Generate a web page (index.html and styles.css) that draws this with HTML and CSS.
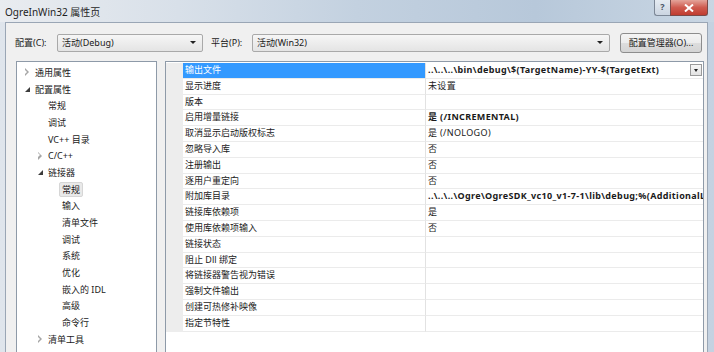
FILE: index.html
```html
<!DOCTYPE html>
<html lang="zh-CN">
<head>
  <meta charset="UTF-8" />
  <title>OgreInWin32 属性页</title>
  <link rel="stylesheet" href="styles.css">
</head>
<body>
  <div class="window">
    <div class="titlebar">
      <span class="title">OgreInWin32 属性页</span>
      <div class="caption-btns">
        <span class="cap-help">?</span>
        <span class="cap-close">
          <svg width="10" height="8" viewBox="0 0 10 8"><path d="M1 0.5 L9 7.5 M9 0.5 L1 7.5" stroke="#fff" stroke-width="2"/></svg>
        </span>
      </div>
    </div>

    <div class="client">
      <div class="toolbar">
        <label class="tb-label">配置(C):</label>
        <div class="combo combo-config"><span>活动(Debug)</span><i class="arrow"></i></div>
        <label class="tb-label tb-label-platform">平台(P):</label>
        <div class="combo combo-platform"><span>活动(Win32)</span><i class="arrow"></i></div>
        <button class="btn">配置管理器(O)...</button>
      </div>

      <div class="main">
        <ul class="tree">
          <li class="node lv0"><span class="tog closed"></span>通用属性</li>
          <li class="node lv0"><span class="tog open"></span>配置属性</li>
          <li class="node lv1"><span class="tog"></span>常规</li>
          <li class="node lv1"><span class="tog"></span>调试</li>
          <li class="node lv1"><span class="tog"></span>VC++ 目录</li>
          <li class="node lv1"><span class="tog closed"></span>C/C++</li>
          <li class="node lv1"><span class="tog open"></span>链接器</li>
          <li class="node lv2"><span class="tog"></span><span class="sel">常规</span></li>
          <li class="node lv2"><span class="tog"></span>输入</li>
          <li class="node lv2"><span class="tog"></span>清单文件</li>
          <li class="node lv2"><span class="tog"></span>调试</li>
          <li class="node lv2"><span class="tog"></span>系统</li>
          <li class="node lv2"><span class="tog"></span>优化</li>
          <li class="node lv2"><span class="tog"></span>嵌入的 IDL</li>
          <li class="node lv2"><span class="tog"></span>高级</li>
          <li class="node lv2"><span class="tog"></span>命令行</li>
          <li class="node lv1"><span class="tog closed"></span>清单工具</li>
          <li class="node lv1"><span class="tog closed"></span>资源</li>
        </ul>

        <div class="grid">
          <div class="row active">
            <div class="name">输出文件</div>
            <div class="value bold">..\..\..\bin\debug\$(TargetName)-YY-$(TargetExt)<i class="drop"></i></div>
          </div>
          <div class="row"><div class="name">显示进度</div><div class="value">未设置</div></div>
          <div class="row"><div class="name">版本</div><div class="value"></div></div>
          <div class="row"><div class="name">启用增量链接</div><div class="value bold">是 (/INCREMENTAL)</div></div>
          <div class="row"><div class="name">取消显示启动版权标志</div><div class="value">是 (/NOLOGO)</div></div>
          <div class="row"><div class="name">忽略导入库</div><div class="value">否</div></div>
          <div class="row"><div class="name">注册输出</div><div class="value">否</div></div>
          <div class="row"><div class="name">逐用户重定向</div><div class="value">否</div></div>
          <div class="row"><div class="name">附加库目录</div><div class="value bold">..\..\..\Ogre\OgreSDK_vc10_v1-7-1\lib\debug;%(AdditionalLibraryDirectories)</div></div>
          <div class="row"><div class="name">链接库依赖项</div><div class="value">是</div></div>
          <div class="row"><div class="name">使用库依赖项输入</div><div class="value">否</div></div>
          <div class="row"><div class="name">链接状态</div><div class="value"></div></div>
          <div class="row"><div class="name">阻止 Dll 绑定</div><div class="value"></div></div>
          <div class="row"><div class="name">将链接器警告视为错误</div><div class="value"></div></div>
          <div class="row"><div class="name">强制文件输出</div><div class="value"></div></div>
          <div class="row"><div class="name">创建可热修补映像</div><div class="value"></div></div>
          <div class="row"><div class="name">指定节特性</div><div class="value"></div></div>
        </div>
      </div>
    </div>
  </div>
</body>
</html>
```

FILE: styles.css
```css
* {
  box-sizing: border-box;
}

body {
  margin: 0;
  width: 714px;
  height: 352px;
  overflow: hidden;
  font-family: "Noto Sans", "Noto Sans CJK SC", sans-serif;
  font-size: 9px;
  color: #1a1a1a;
  background: #f0f0f0;
}

.window {
  height: 352px;
  display: flex;
  flex-direction: column;
  padding: 0 6px 0 5px;
  background: linear-gradient(90deg, #dfe5ec 0%, #cdd8e4 40%, #bccbdc 75%, #c4d2e1 100%);
}

.titlebar {
  height: 22px;
  display: flex;
  align-items: flex-start;
  margin-left: -5px;
  margin-right: -6px;
  background: linear-gradient(90deg, #e9ecf0 0%, #d8e0e9 25%, #c3d1e0 50%, #b7c8da 75%, #c9d6e3 100%);
}

.title {
  padding: 4px 0 0 5px;
  font-size: 10px;
  color: #1e1e1e;
}

.caption-btns {
  margin-left: auto;
  margin-right: 6px;
  display: flex;
}

.cap-help {
  width: 16px;
  height: 16px;
  border: 1px solid #7c8796;
  border-top: none;
  border-right: none;
  border-radius: 0 0 0 3px;
  background: linear-gradient(#e5ebf2, #cbd5e1);
  color: #4a5566;
  font-size: 9px;
  font-weight: bold;
  text-align: center;
  line-height: 14px;
}

.cap-close {
  width: 38px;
  height: 16px;
  border: 1px solid #7b4a48;
  border-top: none;
  border-radius: 0 0 3px 0;
  background: linear-gradient(#e4a49a, #cf5b4f 50%, #c03c30);
  display: flex;
  align-items: center;
  justify-content: center;
}

.client {
  flex: 1;
  display: flex;
  flex-direction: column;
  background: #f0f0f0;
  border: 1px solid #9aa6b5;
  border-bottom: none;
  min-height: 0;
}

.toolbar {
  display: flex;
  align-items: center;
  height: 19px;
  margin-top: 10px;
  padding-left: 9px;
}

.tb-label {
  width: 42px;
}

.tb-label-platform {
  margin-left: 8px;
  width: 41px;
}

.combo {
  height: 18px;
  display: flex;
  align-items: center;
  padding-left: 4px;
  border: 1px solid #a9a9a9;
  border-radius: 2px;
  background: linear-gradient(#f6f6f6, #e4e4e4);
}

.combo span {
  flex: 1;
}

.combo-config {
  width: 146px;
}

.combo-platform {
  width: 358px;
}

.arrow {
  width: 0;
  height: 0;
  margin-right: 6px;
  border-left: 3px solid transparent;
  border-right: 3px solid transparent;
  border-top: 3px solid #222;
}

.btn {
  margin-left: 10px;
  width: 82px;
  height: 20px;
  padding: 0;
  font: inherit;
  color: #1a1a1a;
  border: 1px solid #8d8d8d;
  border-radius: 3px;
  background: linear-gradient(#f4f4f4 0%, #ececec 50%, #dddddd 51%, #d4d4d4 100%);
}

.main {
  flex: 1;
  display: flex;
  margin-top: 9px;
  padding-left: 10px;
  min-height: 0;
}

.tree {
  list-style: none;
  margin: 0;
  padding: 2px 0 0;
  width: 141px;
  border: 1px solid #8e9aa8;
  border-bottom: none;
  background: #fff;
  overflow: hidden;
}

.node {
  display: flex;
  align-items: center;
  height: 16.7px;
  white-space: nowrap;
}

.lv0 {
  padding-left: 5px;
}

.lv1 {
  padding-left: 18px;
}

.lv2 {
  padding-left: 32px;
}

.tog {
  width: 13px;
  height: 8px;
  flex-shrink: 0;
  position: relative;
}

.tog.closed::before {
  content: "";
  position: absolute;
  left: 3px;
  top: 0;
  border-left: 4px solid #a6a6a6;
  border-top: 4px solid transparent;
  border-bottom: 4px solid transparent;
}

.tog.closed::after {
  content: "";
  position: absolute;
  left: 3px;
  top: 1.5px;
  border-left: 2.5px solid #fff;
  border-top: 2.5px solid transparent;
  border-bottom: 2.5px solid transparent;
}

.tog.open::before {
  content: "";
  position: absolute;
  left: 3px;
  top: 2px;
  border-right: 5px solid #3c3c3c;
  border-top: 5px solid transparent;
}

.sel {
  margin-left: -3px;
  padding: 0 2px;
  line-height: 13px;
  background: #e9e9e9;
  border: 1px solid #d6d6d6;
  border-radius: 2px;
}

.grid {
  margin-left: 8px;
  width: 539px;
  border: 1px solid #8e9aa8;
  border-bottom: none;
  background: #fff;
  padding-top: 1px;
  overflow: hidden;
}

.row {
  display: flex;
  height: 15.8px;
  border-left: 17px solid #ededed;
}

.name {
  width: 243px;
  flex-shrink: 0;
  padding-left: 2px;
  line-height: 14.8px;
  border-bottom: 1px solid #ebebeb;
  border-right: 1px solid #e2e2e2;
  white-space: nowrap;
}

.value {
  flex: 1;
  position: relative;
  padding-left: 2px;
  line-height: 14.8px;
  letter-spacing: 0.35px;
  border-bottom: 1px solid #ebebeb;
  white-space: nowrap;
  overflow: hidden;
}

.bold {
  font-weight: bold;
}

.active .name {
  background: #3399ff;
  color: #fff;
}

.drop {
  position: absolute;
  right: 1px;
  top: 1px;
  width: 12px;
  height: 12px;
  border: 1px solid #9a9a9a;
  background: linear-gradient(#f7f7f7, #e2e2e2);
}

.drop::after {
  content: "";
  position: absolute;
  left: 3px;
  top: 4px;
  border-left: 2.5px solid transparent;
  border-right: 2.5px solid transparent;
  border-top: 3px solid #222;
}
```
